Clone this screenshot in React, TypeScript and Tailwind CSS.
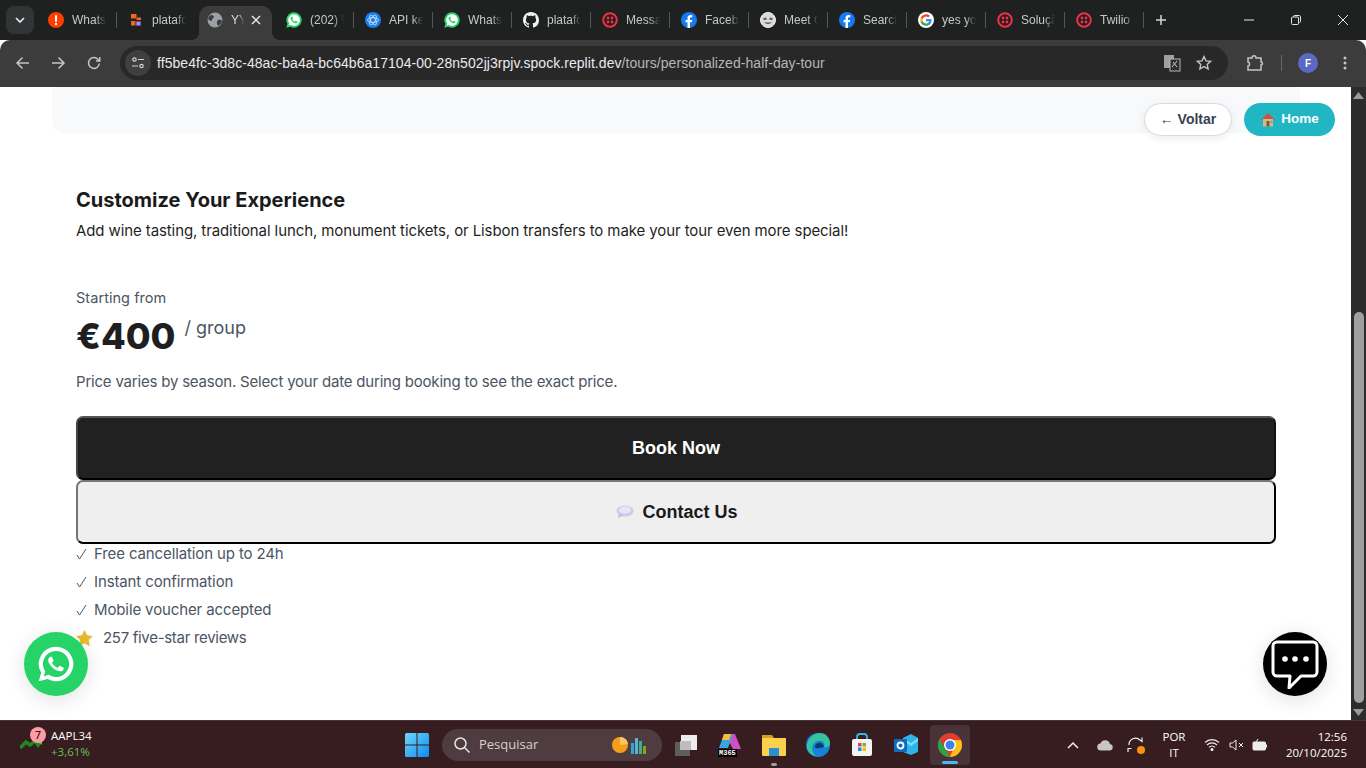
import React from "react";

const sans = "font-['Inter','Open_Sans',sans-serif]";

function TwilioIcon() {
  return (
    <svg width="16" height="16" viewBox="0 0 16 16">
      <circle cx="8" cy="8" r="6.800" fill="none" stroke="#f22f46" strokeWidth="2" />
      <circle cx="6" cy="6" r="1.400" fill="#f22f46" />
      <circle cx="10" cy="6" r="1.400" fill="#f22f46" />
      <circle cx="6" cy="10" r="1.400" fill="#f22f46" />
      <circle cx="10" cy="10" r="1.400" fill="#f22f46" />
    </svg>
  );
}
function FbIcon() {
  return (
    <svg width="16" height="16" viewBox="0 0 16 16">
      <circle cx="8" cy="8" r="8" fill="#1877f2" />
      <path d="M10.900 10.200l.4-2.300H9V6.400c0-.7.3-1.200 1.300-1.200h1V3.200S10.400 3 9.500 3C7.700 3 6.500 4.100 6.500 6.100v1.800h-2v2.300h2V16h2.500v-5.800z" fill="#fff" />
    </svg>
  );
}
function WaIcon({ size = 16, fill = "#25d366", glyph = "#fff" }: { size?: number; fill?: string; glyph?: string }) {
  return (
    <svg width={size} height={size} viewBox="0 0 24 24">
      <path d="M12 .5A11.500 11.500 0 0 0 2.100 17.800L.5 23.500l5.900-1.500A11.500 11.500 0 1 0 12 .5z" fill={fill} />
      <path d="M12 3.300a8.700 8.700 0 0 0-7.400 13.300l.2.300-.9 3.200 3.300-.9.300.2A8.700 8.700 0 1 0 12 3.300zm5 12.300c-.2.600-1.200 1.200-1.700 1.200-.4.100-1 .1-1.600-.1-.4-.1-.8-.3-1.500-.6-2.600-1.100-4.300-3.700-4.400-3.900-.1-.2-1-1.400-1-2.600s.6-1.800.9-2.100c.2-.2.500-.3.700-.3h.5c.2 0 .4 0 .6.400l.8 1.900c.1.100.1.300 0 .5l-.3.500-.4.400c-.1.100-.3.300-.1.500.1.300.7 1.100 1.400 1.800.9.800 1.700 1.100 2 1.200.2.100.4.100.5-.1l.8-.9c.2-.2.300-.2.600-.1l1.800.9c.3.100.4.200.5.300 0 .100 0 .600-.2 1.100z" fill={glyph} />
    </svg>
  );
}
function Dot({ color, children }: { color: string; children?: React.ReactNode }) {
  return (
    <svg width="16" height="16" viewBox="0 0 16 16">
      <circle cx="8" cy="8" r="8" fill={color} />
      {children}
    </svg>
  );
}
const tabIcons: React.ReactNode[] = [
  <Dot color="#ff3d00" key="a"><rect x="7" y="3" width="2" height="7" rx="1" fill="#fff" /><circle cx="8" cy="12" r="1.200" fill="#fff" /></Dot>,
  <svg width="16" height="16" viewBox="0 0 16 16" key="b"><rect x="3" y="2" width="5.500" height="4.500" fill="#f26522" /><rect x="8.500" y="5.500" width="4.500" height="2.500" fill="#f26522" /><rect x="3" y="9" width="4.500" height="4.500" fill="#f26522" /><rect x="8.300" y="9.500" width="4.300" height="4" fill="#a78bfa" /></svg>,
  null,
  <WaIcon key="d" />,
  <Dot color="#1a7fe8" key="e"><g fill="none" stroke="#cfe6ff" strokeWidth="0.8"><ellipse cx="8" cy="8" rx="5.500" ry="2.400" /><ellipse cx="8" cy="8" rx="5.500" ry="2.400" transform="rotate(60 8 8)" /><ellipse cx="8" cy="8" rx="5.500" ry="2.400" transform="rotate(120 8 8)" /></g></Dot>,
  <WaIcon key="f" />,
  <svg width="16" height="16" viewBox="0 0 16 16" key="g"><path fill="#f1f1f1" d="M8 0C3.580 0 0 3.580 0 8c0 3.540 2.290 6.530 5.470 7.590.4.070.55-.17.55-.38 0-.19-.01-.82-.01-1.490-2.010.37-2.530-.49-2.690-.94-.09-.23-.48-.94-.82-1.130-.28-.15-.68-.52-.01-.53.630-.01 1.080.58 1.230.82.720 1.210 1.870.87 2.330.66.070-.52.280-.87.510-1.070-1.780-.2-3.640-.89-3.640-3.950 0-.87.310-1.590.82-2.150-.08-.2-.36-1.020.08-2.120 0 0 .67-.21 2.200.82.640-.18 1.320-.27 2-.27s1.360.09 2 .27c1.530-1.040 2.200-.82 2.200-.82.440 1.100.16 1.920.08 2.120.51.560.82 1.270.82 2.150 0 3.070-1.870 3.750-3.650 3.950.29.250.54.730.54 1.480 0 1.070-.01 1.930-.01 2.200 0 .21.150.46.550.38A8.010 8.010 0 0 0 16 8c0-4.420-3.580-8-8-8z" /></svg>,
  <TwilioIcon key="h" />,
  <FbIcon key="i" />,
  <svg width="16" height="16" viewBox="0 0 16 16" key="j"><circle cx="8" cy="8" r="7.500" fill="#d9d9d9" stroke="#f5f5f5" /><path d="M3 6.500l3-1 1 2-3 .5zM13 6.500l-3-1-1 2 3 .5zM4 10c2 2.500 6 2.500 8 0l-2 .5H6z" fill="#555" /></svg>,
  <FbIcon key="k" />,
  <svg width="16" height="16" viewBox="0 0 16 16" key="l"><circle cx="8" cy="8" r="8" fill="#fff" /><path d="M13.500 8.200c0-.4 0-.8-.1-1.200H8v2.200h3.100a2.700 2.700 0 0 1-1.100 1.700v1.500h1.800c1.100-1 1.700-2.500 1.700-4.200z" fill="#4285f4" /><path d="M8 13.800c1.500 0 2.800-.5 3.800-1.400L10 10.900c-.5.300-1.200.6-2 .6-1.500 0-2.800-1-3.300-2.400H2.800v1.500A5.800 5.800 0 0 0 8 13.800z" fill="#34a853" /><path d="M4.700 9.100a3.500 3.500 0 0 1 0-2.200V5.400H2.800a5.800 5.800 0 0 0 0 5.200z" fill="#fbbc05" /><path d="M8 4.500c.9 0 1.600.3 2.200.9l1.600-1.600A5.800 5.800 0 0 0 2.800 5.400l1.900 1.500C5.200 5.500 6.500 4.500 8 4.500z" fill="#ea4335" /></svg>,
  <TwilioIcon key="m" />,
  <TwilioIcon key="n" />,
];
const tabs = ["Whats", "platafo", "YY", "(202) W", "API ke", "Whats", "platafo", "Messa", "Faceb", "Meet G", "Search", "yes yo", "Soluçã", "Twilio"];

function TabStrip() {
  return (
    <div className="h-10 bg-[#1f2020] flex items-stretch shrink-0 relative">
      <div className="w-[38px] shrink-0 pl-1.5 pt-1.5">
        <div className="w-7 h-7 rounded-lg bg-[#333435] flex items-center justify-center">
          <svg width="10" height="6" viewBox="0 0 10 6"><path d="M1 1l4 4 4-4" fill="none" stroke="#e8e8e8" strokeWidth="1.700" /></svg>
        </div>
      </div>
      <div className="flex">
        {tabs.map((t, i) =>
          i === 2 ? (
            <div key={i} className="w-[73px] mx-[3px] mt-1.5 pb-1.5 bg-[#3c3c3c] rounded-t-[10px] flex items-center pl-2 relative">
              <span className="absolute left-[-8px] bottom-0 w-2 h-2 bg-[radial-gradient(circle_at_0_0,transparent_8px,#3c3c3c_8px)]" />
              <span className="absolute right-[-8px] bottom-0 w-2 h-2 bg-[radial-gradient(circle_at_100%_0,transparent_8px,#3c3c3c_8px)]" />
              <svg width="16" height="16" viewBox="0 0 16 16" className="shrink-0"><circle cx="8" cy="8" r="7.500" fill="#9aa0a6" /><path d="M4 3c2 0 3 1 3 2s-2 1-2 3-3 0-4-1c.5-2 1.500-3.500 3-4zM11 8c2-.5 3.500 0 4 1-.5 2.500-2 4-4 5-1-2-2-4 0-6z" fill="#3c3c3c" /></svg>
              <span className="ml-2 text-[12px] text-[#dadada] w-[13px] overflow-hidden whitespace-nowrap font-['Liberation_Sans',sans-serif] [mask-image:linear-gradient(to_right,black_60%,transparent)]">{t}</span>
              <svg width="10" height="10" viewBox="0 0 10 10" className="absolute left-[52px] top-[9px]"><path d="M1 1l8 8M9 1l-8 8" stroke="#e6e6e6" strokeWidth="1.500" /></svg>
            </div>
          ) : (
            <div key={i} className={`w-[79px] flex items-center relative ${i === 0 ? "pl-[10px]" : "pl-[11px]"}`}>
              <span className="w-4 h-4 shrink-0 flex">{tabIcons[i]}</span>
              <span className="ml-2 text-[12px] text-[#c7c7c7] w-[34px] overflow-hidden whitespace-nowrap font-['Liberation_Sans',sans-serif] [mask-image:linear-gradient(to_right,black_70%,transparent)]">{t}</span>
              {i !== 1 && <span className="absolute right-0 top-[12px] w-px h-4 bg-[#565656]" />}
            </div>
          )
        )}
      </div>
      <div className="ml-[11px] flex items-center">
        <svg width="12" height="12" viewBox="0 0 12 12"><path d="M6 1v10M1 6h10" stroke="#d6d6d6" strokeWidth="1.500" /></svg>
      </div>
      <div className="ml-auto flex items-center pr-[17px] gap-[35px]">
        <svg width="12" height="12" viewBox="0 0 12 12"><path d="M1 6h10" stroke="#e6e6e6" strokeWidth="1" /></svg>
        <svg width="12" height="12" viewBox="0 0 12 12" fill="none" stroke="#e6e6e6"><rect x="1.500" y="3" width="7" height="7.500" rx="1" /><path d="M3.500 2.500c0-.6.400-1 1-1h4.500c1 0 1.500.5 1.500 1.500v4.500c0 .6-.4 1-1 1" /></svg>
        <svg width="12" height="12" viewBox="0 0 12 12"><path d="M1 1l10 10M11 1L1 11" stroke="#e6e6e6" strokeWidth="1" /></svg>
      </div>
    </div>
  );
}

function Toolbar() {
  return (
    <div className="h-[47px] pb-px bg-[#3c3c3c] rounded-t-[10px] flex items-center shrink-0 relative">
      <div className="w-[120px] shrink-0 flex items-center pl-[15px] gap-[21px]">
        <svg width="15" height="14" viewBox="0 0 15 14" fill="none" stroke="#c4c4c4" strokeWidth="1.500"><path d="M14 7H2M7.500 1.500L2 7l5.500 5.500" /></svg>
        <svg width="15" height="14" viewBox="0 0 15 14" fill="none" stroke="#c4c4c4" strokeWidth="1.500"><path d="M1 7h12M7.500 1.500L13 7l-5.500 5.500" /></svg>
        <svg width="14" height="14" viewBox="0 0 14 14" fill="none" stroke="#c4c4c4" strokeWidth="1.500"><path d="M12.300 7.500a5.400 5.400 0 1 1-1.400-4.200L12.800 5M12.800 1v4H9" /></svg>
      </div>
      <div className="w-[1108px] h-[34px] rounded-full bg-[#282828] flex items-center relative">
        <div className="ml-[5px] w-[26px] h-[26px] rounded-full bg-[#3f3f3f] flex items-center justify-center">
          <svg width="14" height="12" viewBox="0 0 14 12" fill="none" stroke="#d0d0d0" strokeWidth="1.200"><circle cx="3.500" cy="2.500" r="1.700" /><path d="M7 2.500h6M1 9h6" /><circle cx="10.500" cy="9" r="1.700" /></svg>
        </div>
        <span className="ml-[6px] text-[14px] leading-none font-['Liberation_Sans',sans-serif] tracking-[0.05px] whitespace-nowrap">
          <span className="text-[#e8eaed]">ff5be4fc-3d8c-48ac-ba4a-bc64b6a17104-00-28n502jj3rpjv.spock.replit.dev</span>
          <span className="text-[#b5b7ba]">/tours/personalized-half-day-tour</span>
        </span>
        <svg width="18" height="18" viewBox="0 0 18 18" className="absolute left-[1043px] top-[8px]"><rect x="1" y="1" width="10" height="13" fill="#a0a0a0" /><rect x="7" y="5" width="10" height="12" fill="#2f2f2f" stroke="#b5b5b5" /><path d="M9 13l5-6M10 8l4 5" stroke="#c8c8c8" /></svg>
        <svg width="16" height="16" viewBox="0 0 16 16" className="absolute left-[1076px] top-[9px]" fill="none" stroke="#c8c8c8" strokeWidth="1.300"><path d="M8 1.500l2 4.300 4.600.5-3.400 3.100 1 4.600L8 11.600l-4.200 2.400 1-4.600L1.400 6.300 6 5.800z" /></svg>
      </div>
      <div className="flex items-center ml-[18px]">
        <svg width="18" height="18" viewBox="0 0 18 18" fill="none" stroke="#c4c4c4" strokeWidth="1.500"><path d="M2 4h4c0-3 4-3 4 0h5v4c2 0 2 3 0 3v5H2v-4c2 0 2-4 0-4z" /></svg>
        <span className="ml-[17px] w-px h-4 bg-[#666]" />
        <span className="ml-[16px] w-5 h-5 rounded-full bg-[#5b69c3] text-white text-[10px] font-bold flex items-center justify-center font-['Liberation_Sans',sans-serif]">F</span>
        <svg width="4" height="14" viewBox="0 0 4 14" className="ml-[25px]"><circle cx="2" cy="2" r="1.500" fill="#c4c4c4" /><circle cx="2" cy="7" r="1.500" fill="#c4c4c4" /><circle cx="2" cy="12" r="1.500" fill="#c4c4c4" /></svg>
      </div>
    </div>
  );
}

function Feature({ icon, children, gap, track = "tracking-[-0.12px]" }: { icon: React.ReactNode; children: React.ReactNode; gap: string; track?: string }) {
  return (
    <div className={`h-7 flex items-center text-[15px] text-[#4b5563] ${gap} ${track}`}>
      <span className="shrink-0 flex items-center">{icon}</span>
      <span>{children}</span>
    </div>
  );
}

const check = <svg width="11" height="12" viewBox="0 0 11 12" fill="none" stroke="#4b5563" strokeWidth="1"><path d="M1 7l2.500 4L10 1" /></svg>;

function Page() {
  return (
    <div className="flex-1 flex min-h-0">
      <div className={`flex-1 bg-white relative overflow-hidden ${sans}`}>
        <div className="mx-[52px] h-[46px] w-[1248px] bg-[#f8f9fb] rounded-b-xl" />
        <div className="pl-[76px] w-[1276px]">
          <h2 className="mt-[54px] text-[20px] leading-[26px] font-bold text-[#1a1a1a]">Customize Your Experience</h2>
          <p className="mt-[6px] text-[15px] leading-[24px] text-[#1f1f1f] tracking-[-0.1px]">Add wine tasting, traditional lunch, monument tickets, or Lisbon transfers to make your tour even more special!</p>
          <p className="mt-[43px] text-[14.5px] leading-[24px] text-[#4b5563] tracking-[0.05px]">Starting from</p>
          <div className="mt-[2px] flex items-start h-[46px]">
            <span className="text-[36px] leading-[48px] font-extrabold text-[#1f1f1f]">€400</span>
            <span className="ml-[9px] mt-[2px] text-[18px] leading-[28px] text-[#4b5563]">/ group</span>
          </div>
          <p className="mt-[12px] text-[15px] leading-[24px] text-[#4b5563] tracking-[-0.2px]">Price varies by season. Select your date during booking to see the exact price.</p>
          <div className="mt-[22px] font-['Liberation_Sans',sans-serif]">
            <button className="w-full h-16 rounded-[7px] bg-[#212121] text-white font-bold text-[18px] border-2 border-t-[#555] border-l-[#444] border-r-[#111] border-b-black">Book Now</button>
            <button className="w-full h-16 rounded-[7px] bg-[#efefef] text-[#1a1a1a] font-bold text-[18px] border-2 border-t-[#767676] border-l-[#767676] border-r-black border-b-black flex items-center justify-center gap-2 pl-[2px]">
              <svg width="18" height="14" viewBox="0 0 18 14"><ellipse cx="9" cy="6" rx="8.500" ry="5.500" fill="#d6c6ee" /><path d="M3 9l-1 4 5-2.500z" fill="#c9b6e4" /><ellipse cx="9" cy="5" rx="6" ry="3.500" fill="#ece4f8" /></svg>
              Contact Us
            </button>
          </div>
          <div className="mt-[-4px]">
            <Feature icon={check} gap="gap-[7px]">Free cancellation up to 24h</Feature>
            <Feature icon={check} gap="gap-[7px]">Instant confirmation</Feature>
            <Feature icon={check} gap="gap-[7px]">Mobile voucher accepted</Feature>
            <Feature gap="gap-[10px]" track="tracking-[-0.3px]" icon={<svg width="17" height="16" viewBox="0 0 17 16"><path d="M8.500.8l2.300 4.900 5.300.7-3.900 3.700 1 5.300-4.700-2.600-4.700 2.600 1-5.300L.9 6.400l5.300-.7z" fill="#eab92d" stroke="#eab92d" strokeLinejoin="round" /></svg>}>257 five-star reviews</Feature>
          </div>
        </div>
        <a className="absolute left-[24px] top-[545px] w-16 h-16 rounded-full bg-[#25d366] shadow-[0_4px_20px_rgba(0,0,0,0.12)] flex items-center justify-center">
          <WaIcon size={36} fill="#fff" glyph="#25d366" />
        </a>
        <a className="absolute left-[1263px] top-[545px] w-16 h-16 rounded-full bg-black shadow-[0_4px_20px_rgba(0,0,0,0.12)] flex items-center justify-center">
          <svg width="50" height="50" viewBox="0 0 50 50"><path d="M7 3h36a4 4 0 0 1 4 4v26a4 4 0 0 1-4 4H31L19 49l1-12H7a4 4 0 0 1-4-4V7a4 4 0 0 1 4-4z" fill="#000" stroke="#fff" strokeWidth="3" strokeLinejoin="round" /><circle cx="15" cy="20" r="2.800" fill="#fff" /><circle cx="25" cy="20" r="2.800" fill="#fff" /><circle cx="36" cy="20" r="2.800" fill="#fff" /></svg>
        </a>
        <a className="absolute left-[1144px] top-[16px] w-[88px] h-[33px] rounded-full bg-white border border-[#d8dbe0] shadow-[0_2px_8px_rgba(0,0,0,0.08)] flex items-center justify-center text-[14px] font-bold text-[#374151] font-['Liberation_Sans',sans-serif]">← Voltar</a>
        <a className="absolute left-[1244px] top-[16px] w-[91px] h-[33px] rounded-full bg-[#20b6c4] flex items-center justify-center gap-[5px] text-[13.5px] font-bold text-white font-['Liberation_Sans',sans-serif]">
          <svg width="16" height="15" viewBox="0 0 16 15"><path d="M8 1L1 8h14z" fill="#c9553b" /><rect x="3" y="7" width="10" height="7.500" fill="#d8b68c" /><rect x="6.500" y="9" width="3" height="5.500" fill="#7a5a3c" /><rect x="10.500" y="9" width="2" height="2" fill="#4aa8d8" /></svg>
          Home
        </a>
      </div>
      <div className="w-[15px] bg-[#2c2c2c] shrink-0 flex flex-col items-center">
        <svg width="11" height="7" viewBox="0 0 11 7" className="mt-[5px]"><path d="M5.500 0L11 7H0z" fill="#9a9a9a" /></svg>
        <div className="mt-[213px] w-[10px] flex-1 rounded-full bg-[#9f9f9f]" />
        <svg width="11" height="7" viewBox="0 0 11 7" className="mt-[6px] mb-[4px]"><path d="M5.500 7L11 0H0z" fill="#9a9a9a" /></svg>
      </div>
    </div>
  );
}

function Taskbar() {
  const app = (n: React.ReactNode) => <div className="w-[44px] h-[40px] flex items-center justify-center relative">{n}</div>;
  return (
    <div className="h-12 shrink-0 bg-[#371c20] border-t border-[#4a3438] flex items-center relative font-['Open_Sans','Noto_Sans',sans-serif] text-white">
      <div className="w-[405px] shrink-0 flex items-center pl-[20px] relative -mt-px">
        <svg width="24" height="16" viewBox="0 0 24 16"><path d="M0 12l6-6 4 3 5-4 3 4 4-7" fill="none" stroke="#1f8a1f" strokeWidth="3.500" /><path d="M14 4l8-3v8z" fill="#55c13a" /></svg>
        <span className="absolute left-[30px] top-[-1px] w-4 h-4 rounded-full bg-[#ff9aa6] text-black text-[11px] leading-4 text-center">7</span>
        <div className="ml-[7px] leading-none">
          <div className="text-[11.5px] font-medium leading-[16px]">AAPL34</div>
          <div className="text-[11.5px] text-[#63c556] leading-[16px]">+3,61%</div>
        </div>
      </div>
      <svg width="24" height="24" viewBox="0 0 24 24" className="shrink-0"><defs><linearGradient id="w" x1="0" y1="0" x2="1" y2="1"><stop offset="0" stopColor="#6fd6fb" /><stop offset="1" stopColor="#0b8cf0" /></linearGradient></defs><rect width="24" height="24" rx="1.500" fill="url(#w)" /><path d="M11.500 0h1v24h-1zM0 11.500h24v1H0z" fill="#371c20" /></svg>
      <div className="ml-[13px] w-[220px] h-8 rounded-full bg-[#4f3c40] flex items-center pl-[11px] relative">
        <svg width="18" height="18" viewBox="0 0 18 18" fill="none" stroke="#e6e6e6" strokeWidth="1.500"><circle cx="7.500" cy="7.500" r="5.500" /><path d="M11.500 11.500l5 5" /></svg>
        <span className="ml-[8px] text-[13px] text-[#d8d2d3]">Pesquisar</span>
        <svg width="38" height="20" viewBox="0 0 38 20" className="absolute left-[169px] top-[6px]"><circle cx="9" cy="10" r="8" fill="#f59e1b" /><path d="M9 10V2a8 8 0 0 1 8 7z" fill="#f9c56b" /><rect x="20" y="8" width="3" height="11" fill="#38a5c9" /><rect x="24" y="3" width="3" height="16" fill="#4db8d8" /><rect x="28" y="6" width="3" height="13" fill="#3fae8f" /><rect x="32" y="11" width="3" height="8" fill="#8aa31f" /></svg>
      </div>
      <div className="ml-[2px] flex items-center">
        {app(<svg width="24" height="24" viewBox="0 0 24 24"><rect x="1" y="9" width="15" height="14" fill="#5e5e5e" /><rect x="7" y="2" width="16" height="15" fill="#ececec" /><rect x="6" y="8" width="11" height="9" fill="#bdbdbd" /></svg>)}
        {app(<div className="relative w-6 h-6"><svg width="24" height="18" viewBox="0 0 24 18"><path d="M7 1h10l6 15H15z" fill="#d14fc5" /><path d="M6 1l-5 14h9l5-14z" fill="#3aa6e0" /><path d="M6 1h7l-2 6H4z" fill="#f5c033" /></svg><span className="absolute left-0 bottom-0 bg-black text-white text-[7px] leading-[8px] font-bold px-px font-['Liberation_Mono',monospace]">M365</span></div>)}
        {app(<><svg width="26" height="22" viewBox="0 0 26 22"><path d="M1 1h10l2 3h12v3H1z" fill="#d6a21c" /><rect x="1" y="4" width="24" height="18" rx="1" fill="#fbd04c" /><rect x="8" y="14" width="10" height="8" fill="#2b8fd6" /></svg><span className="absolute bottom-[-1px] left-[19px] w-[6px] h-[3px] rounded-full bg-[#a59a9c]" /></>)}
        {app(<svg width="26" height="26" viewBox="0 0 26 26"><circle cx="13" cy="13" r="12" fill="#1583d8" /><path d="M2 13C3 5 10 1 15 1c6 0 10 5 10 10 0 3-3 5-6 4 2-4-2-7-6-6-5 1-7 6-5 11 1 3 4 4 4 4C7 24 1 20 2 13z" fill="#37c2a0" /><path d="M10 15c0-3 3-5 6-4 2 1 3 3 3 4-1 0-9 3-9 0z" fill="#0b3a70" /></svg>)}
        {app(<svg width="22" height="24" viewBox="0 0 22 24"><path d="M6 7V4a3 3 0 0 1 3-3h4a3 3 0 0 1 3 3v3" fill="none" stroke="#38b6e8" strokeWidth="1.800" /><rect x="1" y="6" width="20" height="17" rx="2" fill="#f4f4f4" /><rect x="7" y="10" width="3.500" height="3.500" fill="#ea4335" /><rect x="11.500" y="10" width="3.500" height="3.500" fill="#7cb342" /><rect x="7" y="14.500" width="3.500" height="3.500" fill="#1e88e5" /><rect x="11.500" y="14.500" width="3.500" height="3.500" fill="#fbbc05" /></svg>)}
        {app(<svg width="24" height="22" viewBox="0 0 24 22"><path d="M9 4l8-4 7 4v14l-7 3-8-3z" fill="#2db4e8" /><path d="M9 4l8 5 7-5v3l-7 5-8-5z" fill="#7fd7f6" /><rect x="0" y="5" width="13" height="13" rx="1" fill="#0f6cbd" /><circle cx="6.500" cy="11.500" r="3" fill="none" stroke="#fff" strokeWidth="1.800" /></svg>)}
        <div className="ml-[2px] w-[40px] h-[40px] rounded bg-[#4a3338] flex items-center justify-center relative">
          <svg width="24" height="24" viewBox="0 0 24 24"><circle cx="12" cy="12" r="12" fill="#e33b2e" /><path d="M12 24A12 12 0 0 1 1.600 6l5.200 9 .4.500L12 24z" fill="#2aa24a" /><path d="M12 24c6.600 0 12-5.400 12-12 0-1.800-.4-3.500-1-5H12l5 4z" fill="#fbc116" /><circle cx="12" cy="12" r="6" fill="#fff" /><circle cx="12" cy="12" r="4.500" fill="#3b82f0" /></svg>
          <span className="absolute bottom-[1px] left-[12px] w-4 h-[3px] rounded-full bg-[#48b8f0]" />
        </div>
      </div>
      <div className="ml-auto flex items-center pr-[19px]">
        <svg width="12" height="8" viewBox="0 0 12 8" fill="none" stroke="#eee" strokeWidth="1.500"><path d="M1 7l5-5 5 5" /></svg>
        <svg width="17" height="12" viewBox="0 0 17 12" className="ml-[18px]"><path d="M4 11.500a3.500 3.500 0 0 1-.5-7A5 5 0 0 1 13 5a3.300 3.300 0 0 1 0 6.500z" fill="#c9c5c6" /></svg>
        <div className="ml-[13px] relative w-[17px] h-[18px]">
          <svg width="17" height="18" viewBox="0 0 17 18" fill="none" stroke="#eee" strokeWidth="1.200"><path d="M2 9a6.500 6.500 0 0 1 11-5l2 1.500V1.500M1 16v-3.500h3.500" /></svg>
          <span className="absolute right-[-1px] bottom-0 w-2 h-2 rounded-full bg-[#f7930e]" />
        </div>
        <div className="ml-[18px] w-[24px] text-center text-[11.5px] leading-[16px]"><div>POR</div><div>IT</div></div>
        <svg width="16" height="13" viewBox="0 0 16 13" className="ml-[18px]" fill="none" stroke="#eee" strokeWidth="1.100"><path d="M1 4.500a10 10 0 0 1 14 0M3 7a7 7 0 0 1 10 0M5 9.300a4 4 0 0 1 6 0" /><circle cx="8" cy="11.500" r="1" fill="#eee" /></svg>
        <svg width="15" height="12" viewBox="0 0 15 12" className="ml-[9px]" fill="none" stroke="#eee" strokeWidth="1"><path d="M1 4h2.500L7 1v10L3.500 8H1zM10 4l4 4M14 4l-4 4" /></svg>
        <svg width="16" height="12" viewBox="0 0 16 12" className="ml-[8px]" fill="none" stroke="#eee"><rect x="1" y="3" width="12.500" height="8" rx="1" fill="#eee" /><path d="M14.500 5.500v3M4 3l2-3" /></svg>
        <div className="ml-[18px] text-right text-[11.5px] leading-[16px]"><div>12:56</div><div>20/10/2025</div></div>
      </div>
    </div>
  );
}

export default function App() {
  return (
    <div className="w-[1366px] h-[768px] overflow-hidden flex flex-col bg-white">
      <TabStrip />
      <Toolbar />
      <Page />
      <Taskbar />
    </div>
  );
}
